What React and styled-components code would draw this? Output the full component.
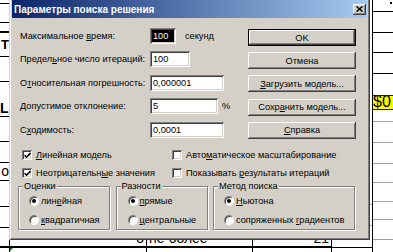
import React from "react";
import styled, { createGlobalStyle } from "styled-components";

const GlobalStyle = createGlobalStyle`
  html, body { margin: 0; padding: 0; background: #fff; }
  #root { width: 393px; height: 252px; }
`;

const UI = `"Liberation Sans", Arial, sans-serif`;

const Page = styled.div`
  position: relative;
  width: 393px;
  height: 252px;
  overflow: hidden;
  background: #fff;
  font-family: ${UI};
`;

/* spreadsheet behind the dialog */
const Sheet = styled.div`
  display: flex;
  height: 100%;
`;

const Col = styled.div`
  flex: none;
  display: flex;
  flex-direction: column;
  width: ${(p) => p.$w}px;
  box-sizing: border-box;
  border-left: ${(p) => p.$left || "none"};
  border-right: ${(p) => p.$right || "none"};
`;

const Cell = styled.div`
  flex: none;
  height: ${(p) => p.$h}px;
  box-sizing: border-box;
  border-bottom: ${(p) => p.$line || "1px solid #000"};
  background: ${(p) => p.$bg || "transparent"};
  display: flex;
  align-items: ${(p) => p.$v || "flex-end"};
  justify-content: ${(p) => p.$align || "flex-start"};
  padding: 0 ${(p) => (p.$tight ? 0 : 2)}px 1px;
  overflow: hidden;
  font-size: ${(p) => p.$fs || 14}px;
  font-weight: ${(p) => (p.$bold ? 700 : 400)};
  line-height: 1;
  white-space: nowrap;
`;

const Dot = styled.span`
  position: absolute;
  right: 1px;
  top: 2px;
  width: 2px;
  height: 2px;
  background: #000;
`;

/* dialog */
const Dialog = styled.div`
  position: absolute;
  left: 9px;
  top: -3px;
  width: 361px;
  height: 243px;
  box-sizing: border-box;
  padding: 3px;
  background: #d4d0c8;
  box-shadow: inset 1px 1px #d4d0c8, inset -1px -1px #404040,
    inset 2px 2px #fff, inset -2px -2px #808080;
  font-size: 9.2px;
  color: #000;
  display: flex;
  flex-direction: column;
`;

const TitleBar = styled.div`
  height: 18px;
  flex: none;
  display: flex;
  align-items: center;
  justify-content: space-between;
  padding-left: 2px;
  background: linear-gradient(to right, #0a246a, #a6caf0);
  color: #fff;
  font-weight: 700;
  font-size: 10px;
`;

const CloseBtn = styled.div`
  width: 13px;
  height: 11px;
  margin-right: 1px;
  background: #d4d0c8;
  box-shadow: inset -1px -1px #404040, inset 1px 1px #fff, inset -2px -2px #808080;
  display: flex;
  align-items: center;
  justify-content: center;
`;

const TopSection = styled.div`
  display: flex;
  padding: 6px 11px 0 8px;
`;

const Form = styled.div`
  width: 228px;
  display: grid;
  grid-template-columns: 130px auto;
  grid-auto-rows: 23.5px;
  align-items: center;
`;

const FieldWrap = styled.div`
  display: flex;
  align-items: center;
  gap: ${(p) => p.$gap || 0}px;
`;

const Field = styled.div`
  width: ${(p) => p.$w}px;
  height: 16px;
  box-sizing: border-box;
  padding-left: 3px;
  display: flex;
  align-items: center;
  background: ${(p) => (p.$selected ? "#000" : "#fff")};
  color: ${(p) => (p.$selected ? "#fff" : "#000")};
  box-shadow: inset 1px 1px #808080, inset -1px -1px #fff,
    inset 2px 2px #404040, inset -2px -2px #d4d0c8;
`;

const ButtonCol = styled.div`
  width: 108px;
  margin-top: 5px;
  display: flex;
  flex-direction: column;
  gap: 6.2px;
`;

const Button = styled.div`
  height: 17px;
  display: flex;
  align-items: center;
  justify-content: center;
  background: #d4d0c8;
  box-shadow: ${(p) =>
    p.$default
      ? "inset 0 0 0 1px #000, inset -2px -2px #404040, inset 2px 2px #fff, inset -3px -3px #808080"
      : "inset -1px -1px #404040, inset 1px 1px #fff, inset -2px -2px #808080"};
`;

const Acc = styled.span`
  text-decoration: underline;
  text-underline-offset: 1px;
`;

const CheckGrid = styled.div`
  display: grid;
  grid-template-columns: 150px auto;
  grid-auto-rows: 18px;
  align-items: center;
  padding: 4.5px 0 0 10px;
`;

const Option = styled.div`
  display: flex;
  align-items: center;
  gap: ${(p) => p.$gap || 4}px;
  white-space: nowrap;
`;

const Box = styled.span`
  flex: none;
  width: 10px;
  height: 10px;
  box-sizing: border-box;
  background: #fff;
  box-shadow: inset 1px 1px #808080, inset -1px -1px #fff,
    inset 2px 2px #404040, inset -2px -2px #d4d0c8;
  display: flex;
  align-items: center;
  justify-content: center;
`;

const Round = styled.span`
  flex: none;
  position: relative;
  width: 10px;
  height: 10px;
  box-sizing: border-box;
  border-radius: 50%;
  background: #fff;
  border: 1px solid;
  border-color: #808080 #fff #fff #808080;
  box-shadow: inset 1px 1px 0 #404040;

  &::after {
    content: "";
    display: ${(p) => (p.$on ? "block" : "none")};
    position: absolute;
    left: 2px;
    top: 2px;
    width: 4px;
    height: 4px;
    border-radius: 50%;
    background: #000;
  }
`;

const Groups = styled.div`
  display: flex;
  gap: 5.5px;
  padding: 4px 0 0 6px;
`;

const Group = styled.div`
  position: relative;
  width: ${(p) => p.$w}px;
  height: 44px;
  box-sizing: border-box;
  border: 1px solid #808080;
  box-shadow: 1px 1px 0 #fff, inset 1px 1px 0 #fff;
  padding: 4.5px 0 0 ${(p) => p.$pl}px;
  display: flex;
  flex-direction: column;
`;

const Legend = styled.span`
  position: absolute;
  top: -6px;
  left: 4px;
  padding: 0 1px;
  line-height: 11px;
  background: #d4d0c8;
`;

const RadioRow = styled(Option)`
  height: 19px;
`;

function Check({ on, children }) {
  return (
    <Option>
      <Box>
        {on && (
          <svg width="7" height="7" viewBox="0 0 7 7">
            <path d="M0.5 3.2 L2.5 5.2 L6.5 1" fill="none" stroke="#000" strokeWidth="1.6" />
          </svg>
        )}
      </Box>
      <span>{children}</span>
    </Option>
  );
}

function Radio({ on, children }) {
  return (
    <RadioRow $gap={2}>
      <Round $on={on} />
      <span>{children}</span>
    </RadioRow>
  );
}

export default function App() {
  return (
    <Page>
      <GlobalStyle />
      <Sheet>
        <Col $w={10} $right="1px solid #000">
          <Cell $h={4} />
          <Cell $h={19} />
          <Cell $h={10} $line="2px solid #000" />
          <Cell $h={24} $v="center" $align="flex-end" $bold $fs={13} $tight>Т</Cell>
          <Cell $h={25} />
          <Cell $h={35} $align="flex-start" $bold $fs={14} $tight>L</Cell>
          <Cell $h={25} />
          <Cell $h={21} />
          <Cell $h={18} $v="center" $align="flex-end" $fs={14} $tight>о</Cell>
          <Cell $h={26} />
          <Cell $h={21} />
          <Cell $h={20} $line="2px solid #000" />
        </Col>
        <Col $w={137} $right="1px solid #000">
          <Cell $h={248} $line="2px solid #000" $align="flex-end">о</Cell>
          <Cell $h={4} $line="none">
            <svg width="4" height="4" viewBox="0 0 4 4" style={{ marginLeft: -2 }}>
              <path d="M0 0 H4 L0 4 Z" fill="#008000" />
            </svg>
          </Cell>
        </Col>
        <Col $w={106} $right="1px solid #000">
          <Cell $h={248} $line="2px solid #000">не более</Cell>
        </Col>
        <Col $w={79} $right="1px solid #000">
          <Cell $h={248} $line="2px solid #000" $align="flex-end">21</Cell>
        </Col>
        <Col $w={40}>
          <Cell $h={205} $line="1px solid #a0a0a0" />
          <Cell $h={21} $line="1px solid #a0a0a0" />
          <Cell $h={22} $line="1px solid #000" />
        </Col>
        <Col $w={21} $left="1px solid #000" style={{ position: "relative" }}>
          <Dot />
          <Cell $h={12} />
          <Cell $h={21} />
          <Cell $h={20} />
          <Cell $h={21} />
          <Cell $h={22} $line="1px solid #0000ff" />
          <Cell $h={14} $bg="#ffff00" $line="1px solid #0000ff" $v="center" $fs={16} $tight>$0</Cell>
          <Cell $h={12} $line="1px solid #a0a0a0" />
          <Cell $h={21} $line="1px solid #a0a0a0" />
          <Cell $h={21} $line="1px solid #a0a0a0" />
          <Cell $h={19} $line="1px solid #a0a0a0" />
          <Cell $h={19} $line="1px solid #a0a0a0" />
          <Cell $h={18} $line="1px solid #a0a0a0" />
          <Cell $h={20} $line="1px solid #a0a0a0" />
        </Col>
      </Sheet>

      <Dialog>
        <TitleBar>
          <span>Параметры поиска решения</span>
          <CloseBtn>
            <svg width="7" height="6" viewBox="0 0 7 6">
              <path d="M0.5 0.5 L6.5 5.5 M6.5 0.5 L0.5 5.5" stroke="#000" strokeWidth="1.5" />
            </svg>
          </CloseBtn>
        </TitleBar>

        <TopSection>
          <Form>
            <span>Максимальное <Acc>в</Acc>ремя:</span>
            <FieldWrap $gap={9}>
              <Field $w={26} $selected>100</Field>
              <span>секунд</span>
            </FieldWrap>
            <span>Предел<Acc>ь</Acc>ное число итераций:</span>
            <FieldWrap>
              <Field $w={40}>100</Field>
            </FieldWrap>
            <span>О<Acc>т</Acc>носительная погрешность:</span>
            <FieldWrap>
              <Field $w={74}>0,000001</Field>
            </FieldWrap>
            <span><Acc>Д</Acc>опустимое отклонение:</span>
            <FieldWrap $gap={4}>
              <Field $w={68}>5</Field>
              <span>%</span>
            </FieldWrap>
            <span>С<Acc>х</Acc>одимость:</span>
            <FieldWrap>
              <Field $w={74}>0,0001</Field>
            </FieldWrap>
          </Form>
          <ButtonCol>
            <Button $default>OK</Button>
            <Button>Отмена</Button>
            <Button><span><Acc>З</Acc>агрузить модель...</span></Button>
            <Button><span>Сохр<Acc>а</Acc>нить модель...</span></Button>
            <Button><span><Acc>С</Acc>правка</span></Button>
          </ButtonCol>
        </TopSection>

        <CheckGrid>
          <Check on><Acc>Л</Acc>инейная модель</Check>
          <Check>Авто<Acc>м</Acc>атическое масштабирование</Check>
          <Check on>Неотрицательн<Acc>ы</Acc>е значения</Check>
          <Check>Показывать <Acc>р</Acc>езультаты итераций</Check>
        </CheckGrid>

        <Groups>
          <Group $w={92} $pl={10}>
            <Legend>Оценки</Legend>
            <Radio on>лин<Acc>е</Acc>йная</Radio>
            <Radio><Acc>к</Acc>вадратичная</Radio>
          </Group>
          <Group $w={92} $pl={11}>
            <Legend>Разности</Legend>
            <Radio on><Acc>п</Acc>рямые</Radio>
            <Radio><Acc>ц</Acc>ентральные</Radio>
          </Group>
          <Group $w={142} $pl={10}>
            <Legend>Метод поиска</Legend>
            <Radio on><Acc>Н</Acc>ьютона</Radio>
            <Radio>сопряженных <Acc>г</Acc>радиентов</Radio>
          </Group>
        </Groups>
      </Dialog>
    </Page>
  );
}
